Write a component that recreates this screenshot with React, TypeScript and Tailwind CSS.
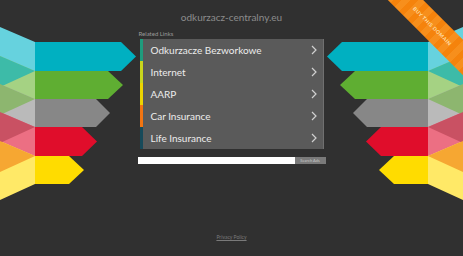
import React from 'react';

const bars = [
  { top: 42, bottom: 71, head: 121, tip: 136, bar: '#00b0c1', fold: '#66d2de' },
  { top: 71, bottom: 99, head: 108, tip: 123, bar: '#5fae32', fold: '#a5d283' },
  { top: 99, bottom: 127, head: 96, tip: 110, bar: '#878787', fold: '#bababa' },
  { top: 127, bottom: 156, head: 82, tip: 97, bar: '#e00d2b', fold: '#ec6f83' },
  { top: 156, bottom: 184, head: 69, tip: 84, bar: '#ffdc00', fold: '#ffe967' },
];

const overlaps = ['#3dbba8', '#8db66f', '#c95163', '#f6a732'];

const links = [
  { label: 'Odkurzacze Bezworkowe', color: 'bg-[#1f9c7d]' },
  { label: 'Internet', color: 'bg-[#c9d61c]' },
  { label: 'AARP', color: 'bg-[#ecd400]' },
  { label: 'Car Insurance', color: 'bg-[#f27511]' },
  { label: 'Life Insurance', color: 'bg-[#174a5a]' },
];

const Arrows = ({ className }: { className: string }) => (
  <svg className={className} width="140" height="256" viewBox="0 0 140 256">
    {bars.map((b, i) => (
      <polygon
        key={'f' + i}
        points={`0,${b.top - 15} 35,${b.top} 35,${b.bottom} 0,${b.bottom + 16}`}
        fill={b.fold}
      />
    ))}
    {overlaps.map((c, i) => {
      const y = bars[i].bottom;
      return <polygon key={'o' + i} points={`35,${y} 0,${y - 15} 0,${y + 16}`} fill={c} />;
    })}
    {bars.map((b, i) => (
      <polygon
        key={'b' + i}
        points={`35,${b.top} ${b.head},${b.top} ${b.tip},${(b.top + b.bottom) / 2} ${b.head},${b.bottom} 35,${b.bottom}`}
        fill={b.bar}
      />
    ))}
  </svg>
);

const Chevron = () => (
  <svg width="6" height="10" viewBox="0 0 6 10" fill="none" stroke="#d0d0d0" strokeWidth="1.2">
    <path d="M1 1l4 4-4 4" />
  </svg>
);

export default function App() {
  return (
    <div className="relative h-[256px] w-full overflow-hidden bg-[#303030] font-['Lato',sans-serif]">
      <Arrows className="absolute left-0 top-0" />
      <Arrows className="absolute right-0 top-0 -scale-x-100" />

      <div className="absolute left-[362px] top-[14px] flex h-[25px] w-[140px] rotate-45 items-center justify-center bg-[repeating-linear-gradient(90deg,#f5830c_0px,#f5830c_6px,#f78f1c_6px,#f78f1c_12px)]">
        <span className="text-[5px] font-bold uppercase tracking-[0.5px] text-[#ffe0b0]">Buy this domain</span>
      </div>

      <div className="relative flex h-full flex-col items-center">
        <h1 className="mt-[11px] text-[10px] leading-[12px] text-[#8c8c8c]">odkurzacz-centralny.eu</h1>

        <div className="mt-[7px] w-[188px] pl-[1px] text-[6px] leading-[8px] text-[#9a9a9a]">Related Links</div>

        <ul className="mt-[1px] flex w-[184px] flex-col border-r border-[#707070] bg-[#5a5a5a]">
          {links.map((link) => (
            <li key={link.label} className="flex h-[22px] items-center">
              <span className={`h-full w-[3px] ${link.color}`} />
              <span className="ml-[8px] flex-1 text-[10px] text-[#ececec]">{link.label}</span>
              <span className="mr-[6px]">
                <Chevron />
              </span>
            </li>
          ))}
        </ul>

        <div className="mt-[8px] flex h-[7px] w-[188px]">
          <div className="flex-1 bg-white" />
          <div className="flex w-[31px] items-center justify-center bg-[#7a7a7a] text-[4px] leading-none text-[#c8c8c8]">
            Search Ads
          </div>
        </div>

        <div className="mt-auto mb-[16px] text-[5px] leading-[6px] text-[#7a7a7a] underline">Privacy Policy</div>
      </div>
    </div>
  );
}
